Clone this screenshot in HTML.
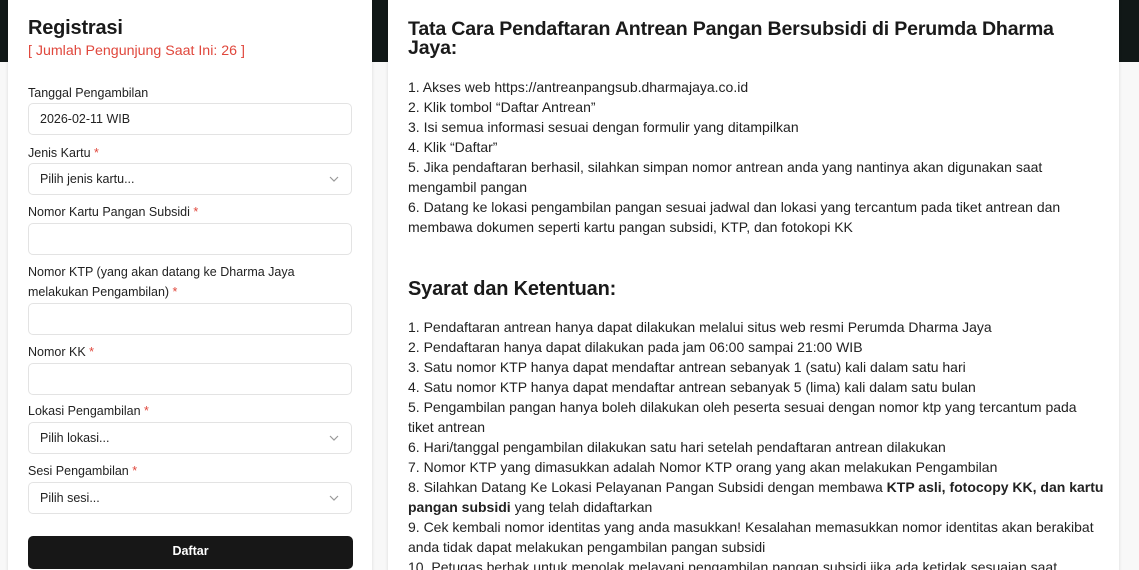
<!DOCTYPE html>
<html><head><meta charset="utf-8"><style>
*{box-sizing:border-box;margin:0;padding:0}
html,body{width:1139px;height:570px;overflow:hidden}
body{background:#f8f8f8;font-family:"Liberation Sans",Arial,sans-serif;color:#1a1a1a;position:relative}
.band{position:absolute;left:0;top:0;width:1139px;height:62px;background:#111817}
.card{position:absolute;background:#fff;border-radius:8px;box-shadow:0 0 3px rgba(0,0,0,.12)}
.l{left:8px;top:-8px;width:364px;height:590px}
.r{left:388px;top:-8px;width:731px;height:590px}
.abs{position:absolute}
h1{font-size:20px;font-weight:bold;letter-spacing:-0.2px}
.lab{position:absolute;left:20px;font-size:12.5px;color:#222;line-height:20px}
.req{color:#e0473c}
.in{position:absolute;left:20px;width:324px;height:32px;border:1px solid #e3e3e3;border-radius:5px;font-size:12.5px;padding-left:11px;line-height:30px;color:#222}
.chev{position:absolute;right:12px;top:11px}
.btn{position:absolute;left:20px;top:544px;width:325px;height:33px;background:#171717;border-radius:5px;color:#fff;font-size:12.5px;font-weight:bold;text-align:center;line-height:31px}
.txt{position:absolute;left:20px;width:700px;font-size:14px;line-height:20px;color:#222}
</style></head><body>
<div class="band"></div>
<div class="card l">
<h1 class="abs" style="left:20px;top:25px">Registrasi</h1>
<div class="abs" style="left:20px;top:51px;font-size:14.2px;color:#e0473c">[ Jumlah Pengunjung Saat Ini: 26 ]</div>
<div class="lab" style="top:91px">Tanggal Pengambilan</div>
<div class="in" style="top:111px">2026-02-11 WIB</div>
<div class="lab" style="top:151px">Jenis Kartu <span class="req">*</span></div>
<div class="in" style="top:171px">Pilih jenis kartu...<svg class="chev" width="10" height="8" viewBox="0 0 10 8"><path d="M1 2l4 4 4-4" fill="none" stroke="#999" stroke-width="1.2"/></svg></div>
<div class="lab" style="top:210px">Nomor Kartu Pangan Subsidi <span class="req">*</span></div>
<div class="in" style="top:231px"></div>
<div class="lab" style="top:270px">Nomor KTP (yang akan datang ke Dharma Jaya<br>melakukan Pengambilan) <span class="req">*</span></div>
<div class="in" style="top:311px"></div>
<div class="lab" style="top:350px">Nomor KK <span class="req">*</span></div>
<div class="in" style="top:371px"></div>
<div class="lab" style="top:409px">Lokasi Pengambilan <span class="req">*</span></div>
<div class="in" style="top:430px">Pilih lokasi...<svg class="chev" width="10" height="8" viewBox="0 0 10 8"><path d="M1 2l4 4 4-4" fill="none" stroke="#999" stroke-width="1.2"/></svg></div>
<div class="lab" style="top:469px">Sesi Pengambilan <span class="req">*</span></div>
<div class="in" style="top:490px">Pilih sesi...<svg class="chev" width="10" height="8" viewBox="0 0 10 8"><path d="M1 2l4 4 4-4" fill="none" stroke="#999" stroke-width="1.2"/></svg></div>
<div class="btn">Daftar</div>
</div>
<div class="card r">
<h1 class="abs" style="left:20px;top:28px;width:680px;line-height:19px;font-size:19.6px">Tata Cara Pendaftaran Antrean Pangan Bersubsidi di Perumda Dharma Jaya:</h1>
<div class="txt" style="top:85px">1. Akses web https://antreanpangsub.dharmajaya.co.id<br>2. Klik tombol “Daftar Antrean”<br>3. Isi semua informasi sesuai dengan formulir yang ditampilkan<br>4. Klik “Daftar”<br>5. Jika pendaftaran berhasil, silahkan simpan nomor antrean anda yang nantinya akan digunakan saat<br>mengambil pangan<br>6. Datang ke lokasi pengambilan pangan sesuai jadwal dan lokasi yang tercantum pada tiket antrean dan<br>membawa dokumen seperti kartu pangan subsidi, KTP, dan fotokopi KK</div>
<h1 class="abs" style="left:20px;top:286px">Syarat dan Ketentuan:</h1>
<div class="txt" style="top:325px">1. Pendaftaran antrean hanya dapat dilakukan melalui situs web resmi Perumda Dharma Jaya<br>2. Pendaftaran hanya dapat dilakukan pada jam 06:00 sampai 21:00 WIB<br>3. Satu nomor KTP hanya dapat mendaftar antrean sebanyak 1 (satu) kali dalam satu hari<br>4. Satu nomor KTP hanya dapat mendaftar antrean sebanyak 5 (lima) kali dalam satu bulan<br>5. Pengambilan pangan hanya boleh dilakukan oleh peserta sesuai dengan nomor ktp yang tercantum pada<br>tiket antrean<br>6. Hari/tanggal pengambilan dilakukan satu hari setelah pendaftaran antrean dilakukan<br>7. Nomor KTP yang dimasukkan adalah Nomor KTP orang yang akan melakukan Pengambilan<br>8. Silahkan Datang Ke Lokasi Pelayanan Pangan Subsidi dengan membawa <b>KTP asli, fotocopy KK, dan kartu<br>pangan subsidi</b> yang telah didaftarkan<br>9. Cek kembali nomor identitas yang anda masukkan! Kesalahan memasukkan nomor identitas akan berakibat<br>anda tidak dapat melakukan pengambilan pangan subsidi<br>10. Petugas berhak untuk menolak melayani pengambilan pangan subsidi jika ada ketidak sesuaian saat</div>
</div>
</body></html>
